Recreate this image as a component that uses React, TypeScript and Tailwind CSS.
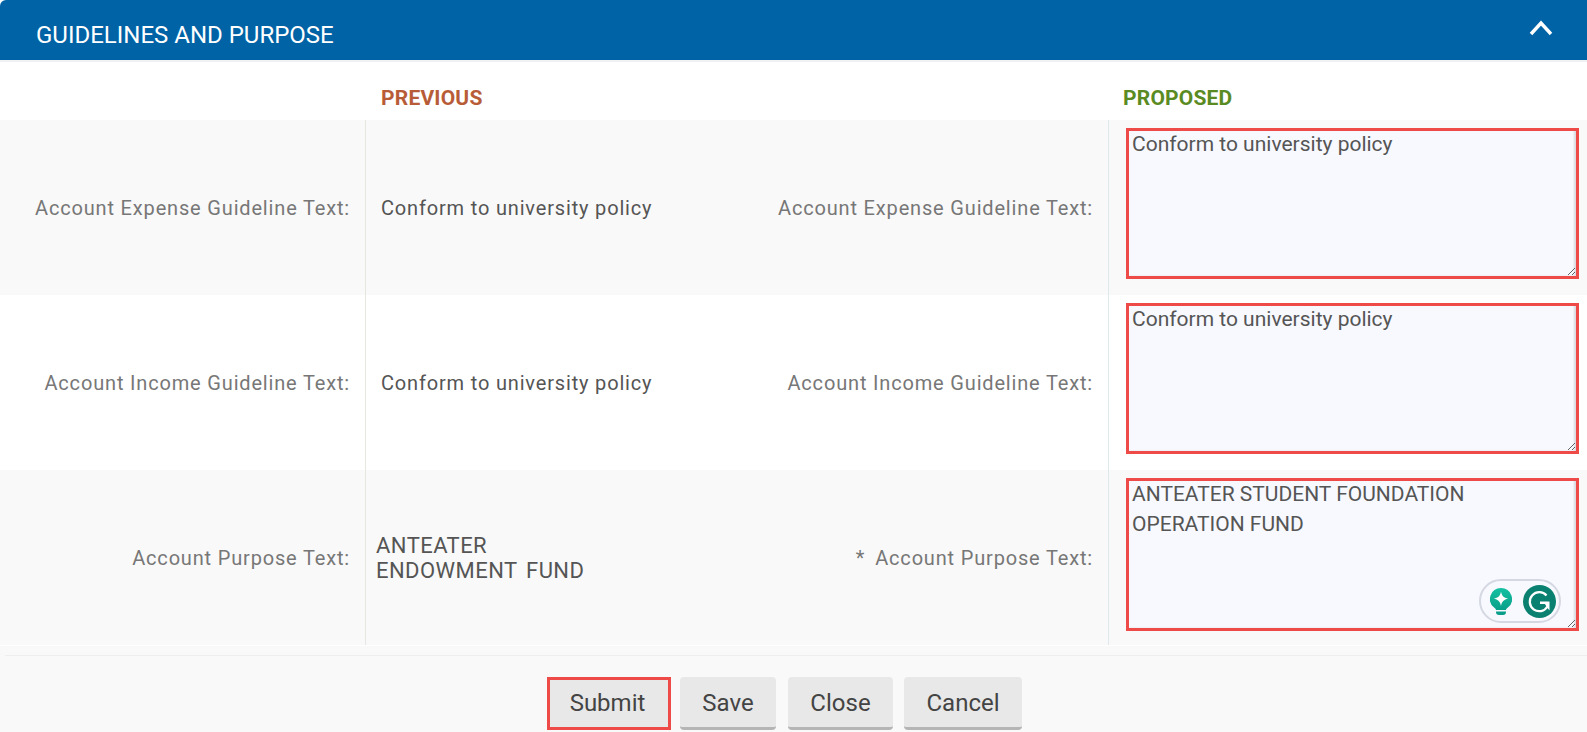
import React from "react";

const rows = [
  { label: "Account Expense Guideline Text:", prev: "Conform to university policy", proposed: "Conform to university policy", shade: true },
  { label: "Account Income Guideline Text:", prev: "Conform to university policy", proposed: "Conform to university policy", shade: false },
];

function Area({ value, grammarly, tall }: { value: string; grammarly?: boolean; tall?: boolean }) {
  return (
    <div className={`relative w-[453px] ${tall ? "h-[153px]" : "h-[151px]"}`}>
      <textarea
        readOnly
        defaultValue={value}
        className="block h-full w-full border-[3px] border-t-[1px] border-[#ee4a48] bg-[#f7f9fe] py-0 pl-[3px] pr-2 text-[21px] leading-[30px] text-[#555] outline-none shadow-[inset_0_2px_0_#ee4a48,inset_-2px_0_2px_rgba(0,0,0,0.12)]"
      />
      {grammarly && (
        <div className="absolute left-[353px] top-[101px] flex h-[44px] w-[82px] items-center justify-between rounded-full border-2 border-[#d5d8e2] bg-[#f7f9fe] pl-[9px] pr-[3px]">
          <svg width="22" height="27" viewBox="0 0 22 27">
            <defs>
              <linearGradient id="bulb" x1="0" y1="0" x2="0" y2="1">
                <stop offset="0" stopColor="#14c0a2" />
                <stop offset="1" stopColor="#0a9f8a" />
              </linearGradient>
            </defs>
            <path d="M11 0a11 11 0 0 0-6.6 19.8c.9.7 1.4 1.2 1.6 2.2h10c.2-1 .7-1.5 1.6-2.2A11 11 0 0 0 11 0z" fill="url(#bulb)" />
            <path d="M11 3.500c.7 4.200 2.900 6.500 7.200 7.200-4.300.7-6.500 2.900-7.200 7.200-.7-4.300-2.900-6.500-7.200-7.200 4.300-.7 6.500-3 7.200-7.200z" fill="#fff" />
            <path d="M6 23.500h10V24a3 3 0 0 1-3 3H9a3 3 0 0 1-3-3z" fill="#0a9f8a" />
          </svg>
          <svg width="33" height="33" viewBox="0 0 33 33">
            <circle cx="16.500" cy="16.500" r="16.500" fill="#0a8170" />
            <path d="M23.500 10.500a9.500 9.500 0 1 0 1 11" fill="none" stroke="#fff" strokeWidth="2.300" />
            <path d="M17 16.500h9.500v9l-3-3.800-1.500-2.700H17z" fill="#fff" />
          </svg>
        </div>
      )}
    </div>
  );
}

function Row({ label, prev, value, shade, prevNode, star, grammarly }: { label: string; prev?: string; value: string; shade: boolean; prevNode?: React.ReactNode; star?: boolean; grammarly?: boolean }) {
  return (
    <div className={`flex h-[175px] items-stretch text-[20px] tracking-[0.83px] ${shade ? "bg-[#f9f9f9]" : "bg-white"}`}>
      <div className="flex w-[366px] items-center justify-end whitespace-nowrap border-r border-[#e8e6e0] pr-[15px] text-[#777]">{label}</div>
      <div className="flex w-[373px] items-center pl-[15px] text-[#555]">{prevNode ?? prev}</div>
      <div className="flex w-[370px] items-center justify-end whitespace-nowrap border-r border-[#dfe8ec] pr-[15px] text-[#777]">
        {star && <span className="mr-[10px]">*</span>}
        {label}
      </div>
      <div className="flex flex-1 pl-[17px] pt-[8px] tracking-normal">
        <Area value={value} grammarly={grammarly} tall={grammarly} />
      </div>
    </div>
  );
}

function Btn({ children, className }: { children: string; className: string }) {
  return <button className={`h-[53px] rounded-[4px] bg-[#e8e8e8] text-[24px] text-[#444] ${className}`}>{children}</button>;
}

export default function App() {
  return (
    <div className="h-[732px] overflow-hidden bg-white font-['Roboto',sans-serif]">
      <div className="flex h-[60px] items-center justify-between rounded-tl-[6px] bg-[#0063a6] pl-[36px] pr-[34px] text-white">
        <span className="pt-[9px] text-[24px]">GUIDELINES AND PURPOSE</span>
        <svg width="24" height="16" viewBox="0 0 24 16" className="mb-[4px]">
          <path d="M2 14 12 3l10 11" fill="none" stroke="#fff" strokeWidth="3.4" />
        </svg>
      </div>
      <div className="h-[2px] bg-[#f0f1f3]" />
      <div className="flex h-[58px] items-center pt-[16px] text-[21px] font-bold tracking-[0.2px]">
        <div className="ml-[381px] w-[742px] text-[#b85c38]">PREVIOUS</div>
        <div className="text-[#5a8a22]">PROPOSED</div>
      </div>
      {rows.map((r) => (
        <Row key={r.label} label={r.label} prev={r.prev} value={r.proposed} shade={r.shade} />
      ))}
      <Row
        label="Account Purpose Text:"
        shade
        star
        grammarly
        value={"ANTEATER STUDENT FOUNDATION\nOPERATION FUND"}
        prevNode={<div className="-ml-[5px] text-[22px] leading-[25px] tracking-[0.45px] [word-spacing:3px]">ANTEATER<br />ENDOWMENT FUND</div>}
      />
      <div className="h-px bg-white" />
      <div className="h-[9px] bg-[#f9f9f9]" />
      <div className="bg-[#f9f9f9] pl-[5px]">
        <div className="flex h-[77px] justify-center border-t border-[#eeeeee] pt-[21px] pr-[23px]">
          <Btn className="w-[124px] rounded-none border-[3px] border-[#ee4a48] pb-[2px] pr-[3px]">Submit</Btn>
          <Btn className="ml-[9px] w-[96px] border-b-[3px] border-[#b5b5b5] pt-[2px]">Save</Btn>
          <Btn className="ml-[12px] w-[105px] border-b-[3px] border-[#b5b5b5] pt-[2px]">Close</Btn>
          <Btn className="ml-[11px] w-[118px] border-b-[3px] border-[#b5b5b5] pt-[2px]">Cancel</Btn>
        </div>
      </div>
    </div>
  );
}
